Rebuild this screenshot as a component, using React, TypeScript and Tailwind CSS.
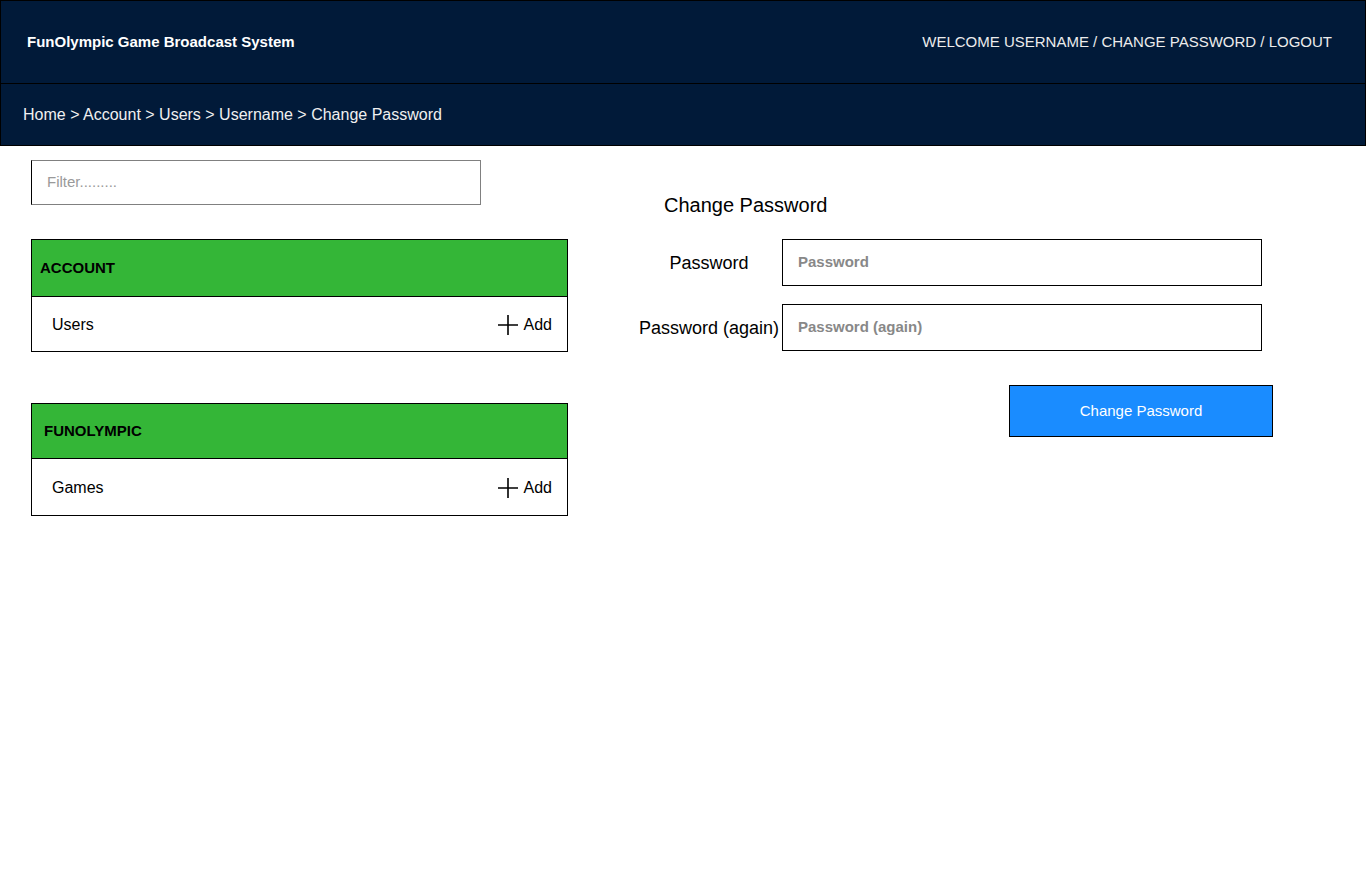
import React from 'react';

const Plus: React.FC = () => (
  <svg width="20" height="20" viewBox="0 0 20 20" className="shrink-0">
    <path d="M10 0v20M0 10h20" stroke="#000" strokeWidth="1.6" fill="none" />
  </svg>
);

const Panel: React.FC<{ title: string; item: string; titlePad: string; headH: string; bodyH: string }> = ({
  title,
  item,
  titlePad,
  headH,
  bodyH,
}) => (
  <div className="border border-black">
    <div className={`bg-[#34b637] border-b border-black flex items-center ${headH} ${titlePad}`}>
      <span className="text-[15px] font-bold text-black">{title}</span>
    </div>
    <div className={`flex items-center justify-between pl-[20px] pr-[15px] pt-[2px] ${bodyH}`}>
      <span className="text-[16px] text-black">{item}</span>
      <div className="flex items-center gap-[6px]">
        <Plus />
        <span className="text-[16px] text-black">Add</span>
      </div>
    </div>
  </div>
);

const App: React.FC = () => {
  return (
    <div className="min-h-[874px] bg-white font-['Liberation_Sans',Arial,sans-serif]">
      {/* Top bar */}
      <div className="h-[84px] bg-[#011a39] border border-black flex items-center justify-between pl-[26px] pr-[33px]">
        <span className="text-[15px] font-bold text-white">FunOlympic Game Broadcast System</span>
        <span className="text-[15px] text-[#ececec]">WELCOME USERNAME / CHANGE PASSWORD / LOGOUT</span>
      </div>
      {/* Breadcrumb */}
      <div className="h-[62px] bg-[#011a39] border-x border-b border-black flex items-center pl-[22px]">
        <span className="text-[16px] text-[#f0f0f0]">Home &gt; Account &gt; Users &gt; Username &gt; Change Password</span>
      </div>

      <div className="flex">
        {/* Sidebar */}
        <div className="ml-[31px] w-[537px] pt-[14px]">
          <div className="w-[450px] h-[45px] border border-[#808080] border-l-black flex items-center pl-[15px]">
            <span className="text-[15px] text-[#9a9a9a]">Filter.........</span>
          </div>
          <div className="mt-[34px]">
            <Panel title="ACCOUNT" item="Users" titlePad="pl-[8px]" headH="h-[57px]" bodyH="h-[54px]" />
          </div>
          <div className="mt-[51px]">
            <Panel title="FUNOLYMPIC" item="Games" titlePad="pl-[12px]" headH="h-[55px]" bodyH="h-[56px]" />
          </div>
        </div>

        {/* Change password form */}
        <div className="ml-[71px] pt-[47px]">
          <div className="pl-[25px] text-[20px] leading-[24px] text-black">Change Password</div>
          <div className="mt-[22px] flex items-center gap-[3px]">
            <span className="w-[140px] text-center text-[18px] text-black pt-[2px]">Password</span>
            <div className="w-[480px] h-[47px] border border-black flex items-center pl-[15px]">
              <span className="text-[15px] font-bold text-[#888888]">Password</span>
            </div>
          </div>
          <div className="mt-[18px] flex items-center gap-[3px]">
            <span className="w-[140px] text-center text-[18px] text-black whitespace-nowrap pt-[2px]">Password (again)</span>
            <div className="w-[480px] h-[47px] border border-black flex items-center pl-[15px]">
              <span className="text-[15px] font-bold text-[#888888]">Password (again)</span>
            </div>
          </div>
          <div className="mt-[34px] ml-[370px] w-[264px] h-[52px] bg-[#1a8cff] border border-black flex items-center justify-center">
            <span className="text-[15px] text-white">Change Password</span>
          </div>
        </div>
      </div>
    </div>
  );
};

export default App;
